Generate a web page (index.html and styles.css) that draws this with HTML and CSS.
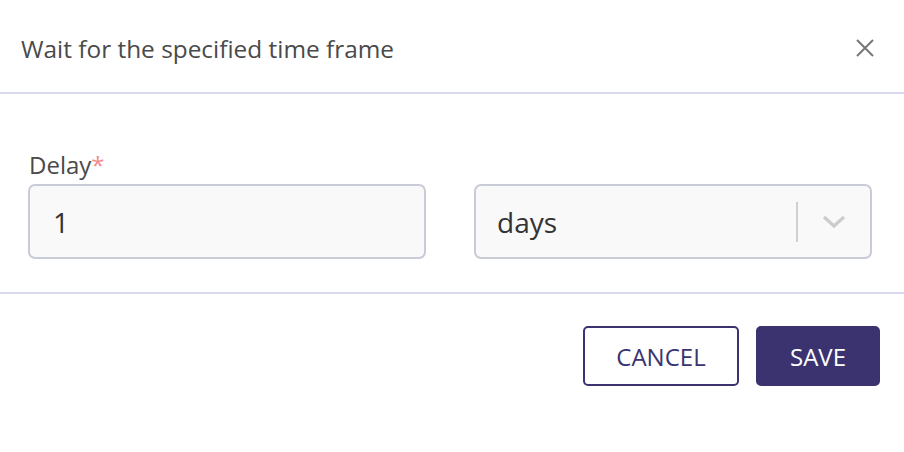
FILE: index.html
```html
<!DOCTYPE html>
<html>
<head>
<meta charset="utf-8">
<link rel="stylesheet" href="styles.css">
</head>
<body>
<div class="dialog">
  <div class="header">
    <h2 class="title">Wait for the specified time frame</h2>
    <button class="close" aria-label="Close">
      <svg width="18" height="18" viewBox="0 0 18 18"><path d="M1 1L17 17M17 1L1 17" stroke="#777" stroke-width="2" fill="none"/></svg>
    </button>
  </div>
  <div class="content">
    <div class="field">
      <label class="label">Delay<span class="req">*</span></label>
      <div class="row">
        <div class="input">1</div>
        <div class="select">
          <span class="select-value">days</span>
          <span class="sep"></span>
          <svg class="chev" width="24" height="14" viewBox="0 0 24 14"><path d="M2 2L12 11L22 2" stroke="#cccccc" stroke-width="3.2" fill="none"/></svg>
        </div>
      </div>
    </div>
  </div>
  <div class="footer">
    <button class="btn btn-outline">CANCEL</button>
    <button class="btn btn-primary">SAVE</button>
  </div>
</div>
</body>
</html>
```
FILE: styles.css
```css
* { box-sizing: border-box; }
html, body { margin: 0; padding: 0; background: #fff; }
body { font-family: "Open Sans", "Noto Sans", sans-serif; color: #444; }
.dialog { width: 904px; }
.header {
  height: 94px;
  padding: 4px 30px 0 21px;
  display: flex;
  align-items: center;
  justify-content: space-between;
  border-bottom: 2px solid #d8d8ee;
}
.title { margin: 0; font-size: 24.4px; font-weight: 400; color: #4a4a4a; }
.close { border: 0; background: none; padding: 0; width: 18px; height: 18px; display: flex; }
.content { padding: 54px 32px 33px 28px; border-bottom: 2px solid #d8d8ee; }
.label { display: block; font-size: 24px; color: #4a4a4a; line-height: 34px; margin-bottom: 2px; padding-left: 1px; }
.req { color: #f28b8b; }
.row { display: grid; grid-template-columns: 1fr 1fr; gap: 48px; }
.input, .select {
  height: 75px;
  border: 2px solid #c9cbd6;
  border-radius: 7px;
  background: #f9f9f9;
  display: flex;
  align-items: center;
  font-size: 28px;
  color: #333;
}
.input { padding-left: 23px; }
.select { padding-left: 21px; padding-right: 24px; }
.select-value { flex: 1; }
.sep { width: 2px; height: 40px; background: #d0d0d0; margin-right: 24px; }
.footer { display: flex; justify-content: flex-end; gap: 17px; padding: 32px 24px 0 0; }
.btn {
  height: 60px;
  border-radius: 5px;
  font-family: "Open Sans", sans-serif;
  font-size: 24px;
  border: 2px solid #3a3370;
}
.btn-outline { width: 156px; background: #fff; color: #3a3370; }
.btn-primary { width: 124px; background: #3a3370; color: #fff; }
```
